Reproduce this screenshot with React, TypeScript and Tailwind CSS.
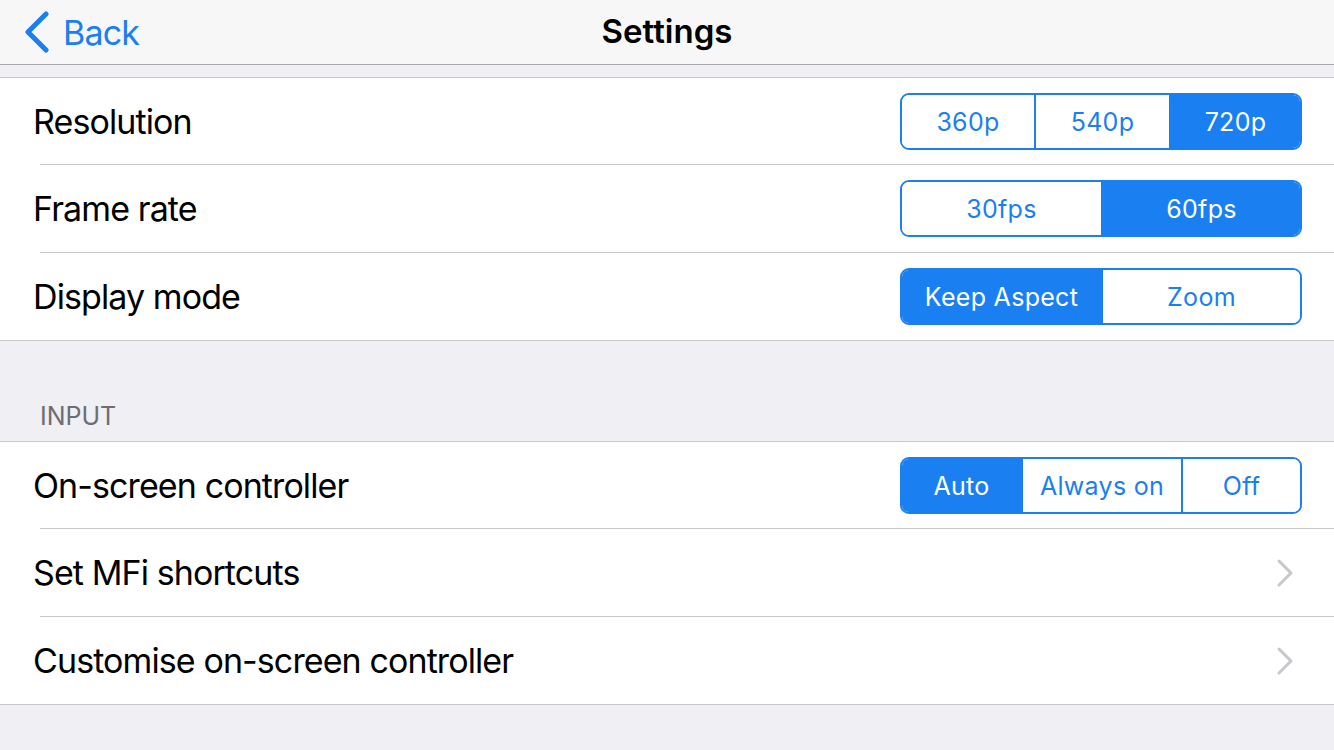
type SegProps = { items: { label: string; w: string }[]; active: number };

function Segmented({ items, active }: SegProps) {
  return (
    <div className="flex h-[57px] rounded-[9px] border-2 border-[#1a7ff0] overflow-hidden">
      {items.map((it, i) => (
        <div
          key={it.label}
          className={`${it.w} flex items-center justify-center pt-[3px] text-[25px] tracking-[0.3px] ${
            i > 0 ? "border-l-2 border-[#1a7ff0]" : ""
          } ${i === active ? "bg-[#1a7ff0] text-white" : "bg-white text-[#1a7ff0]"}`}
        >
          {it.label}
        </div>
      ))}
    </div>
  );
}

function Row({
  label,
  pos,
  children,
}: {
  label: string;
  pos: "first" | "mid" | "last";
  children?: React.ReactNode;
}) {
  const h =
    pos === "first"
      ? "h-[87px] border-b border-[#c8c7cc]"
      : pos === "mid"
        ? "h-[88px] border-b border-[#c8c7cc]"
        : "h-[87px]";
  return (
    <div className="pl-[40px]">
      <div className={`flex items-center justify-between pr-[32px] ${h}`}>
        <span className="-ml-[7px] text-[34px] text-black tracking-[-0.9px]">{label}</span>
        {children}
      </div>
    </div>
  );
}

function Disclosure() {
  return (
    <svg width="20" height="30" viewBox="0 0 20 30" fill="none" className="mr-[7px]">
      <path d="M4 3 L16 15 L4 27" stroke="#c7c7cc" strokeWidth="3" strokeLinecap="round" strokeLinejoin="round" />
    </svg>
  );
}

export default function App() {
  return (
    <div
      className="w-[1334px] h-[750px] bg-[#efeff4] overflow-hidden"
      style={{ fontFamily: "Inter, 'Liberation Sans', sans-serif" }}
    >
      {/* nav bar */}
      <div className="relative h-[65px] bg-[#f7f7f8] border-b border-[#a9a9ad] flex items-center justify-center">
        <div className="absolute left-[22px] top-0 h-full flex items-center gap-[11px] text-[#1a7ff0]">
          <svg width="30" height="42" viewBox="0 0 30 42" fill="none">
            <path d="M24 3 L6 21 L24 39" stroke="#1a7ff0" strokeWidth="5" strokeLinecap="round" strokeLinejoin="round" />
          </svg>
          <span className="text-[34px] tracking-[-0.8px]">Back</span>
        </div>
        <span className="text-[33px] font-semibold text-black">Settings</span>
      </div>

      {/* display section */}
      <div className="mt-[12px] bg-white border-y border-[#c8c7cc]">
        <Row label="Resolution" pos="first">
          <Segmented
            active={2}
            items={[
              { label: "360p", w: "w-[132px]" },
              { label: "540p", w: "w-[135px]" },
              { label: "720p", w: "w-[131px]" },
            ]}
          />
        </Row>
        <Row label="Frame rate" pos="mid">
          <Segmented
            active={1}
            items={[
              { label: "30fps", w: "w-[199px]" },
              { label: "60fps", w: "w-[199px]" },
            ]}
          />
        </Row>
        <Row label="Display mode" pos="last">
          <Segmented
            active={0}
            items={[
              { label: "Keep Aspect", w: "w-[199px]" },
              { label: "Zoom", w: "w-[199px]" },
            ]}
          />
        </Row>
      </div>

      {/* input header */}
      <div className="h-[100px] flex items-end pl-[40px] pb-[6px] text-[25px] text-[#6d6d72]">
        INPUT
      </div>

      <div className="bg-white border-y border-[#c8c7cc]">
        <Row label="On-screen controller" pos="first">
          <Segmented
            active={0}
            items={[
              { label: "Auto", w: "w-[119px]" },
              { label: "Always on", w: "w-[160px]" },
              { label: "Off", w: "w-[119px]" },
            ]}
          />
        </Row>
        <Row label="Set MFi shortcuts" pos="mid">
          <Disclosure />
        </Row>
        <Row label="Customise on-screen controller" pos="last">
          <Disclosure />
        </Row>
      </div>
    </div>
  );
}
